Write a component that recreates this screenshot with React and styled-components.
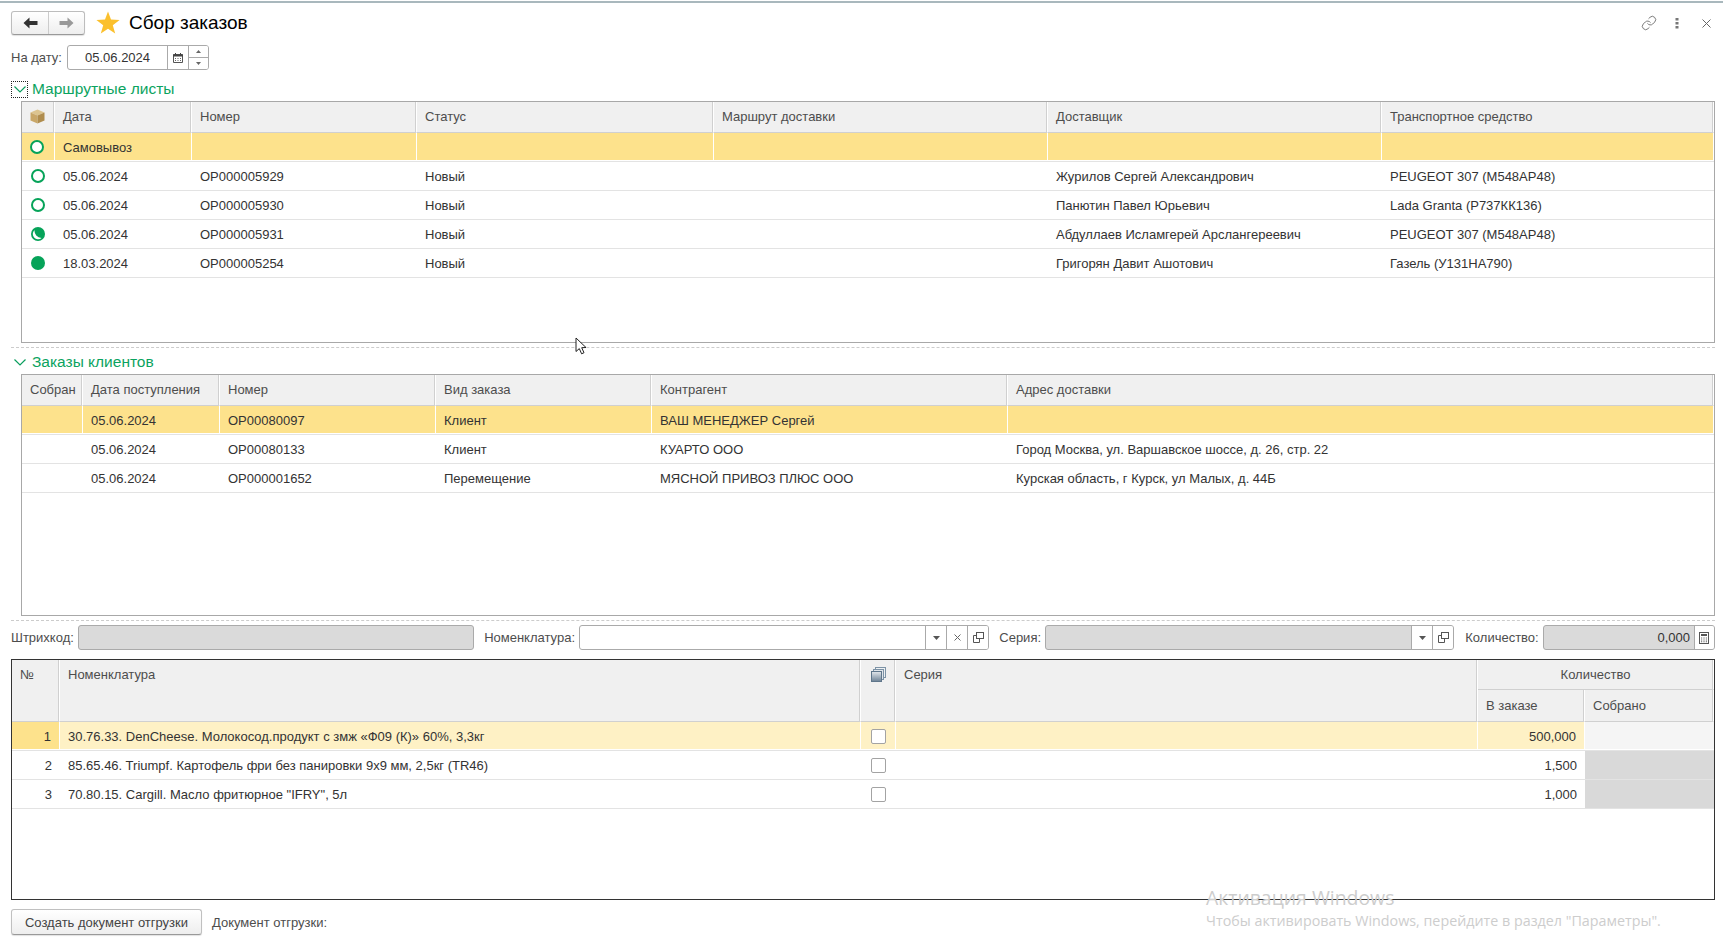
import React from "react";
import styled, { createGlobalStyle } from "styled-components";
import { Link } from "lucide-react";

const GlobalStyle = createGlobalStyle`
  html, body {
    margin: 0;
    padding: 0;
    background: #fff;
    overflow: hidden;
  }
  * { box-sizing: border-box; }
`;

const Page = styled.div`
  position: relative;
  width: 1723px;
  height: 944px;
  overflow: hidden;
  background: #fff;
  color: #333;
  font: 13px "Liberation Sans", Arial, sans-serif;
`;

const TopLine = styled.div`
  height: 3px;
  border-top: 1px solid #fff;
  border-bottom: 2px solid #a9b8bd;
`;

const Content = styled.div`
  display: flex;
  flex-direction: column;
  padding: 0 8px 0 11px;
`;

const TitleBar = styled.div`
  display: flex;
  align-items: center;
  height: 24px;
  margin-top: 8px;
`;

const NavGroup = styled.div`
  display: flex;
  width: 74px;
  height: 24px;
  border: 1px solid #bdbdbd;
  border-bottom-color: #999;
  border-radius: 3px;
  background: linear-gradient(#fff, #eee);
  box-shadow: 0 1px 1px rgba(0, 0, 0, 0.12);
`;

const NavButton = styled.div`
  flex: ${({ $last }) => ($last ? 1 : "0 0 37px")};
  display: flex;
  align-items: center;
  justify-content: center;
  border-right: ${({ $last }) => ($last ? "none" : "1px solid #ccc")};
`;

const Star = styled.svg`
  width: 24px;
  height: 24px;
  margin-left: 11px;
`;

const Title = styled.h1`
  margin: 0 0 0 9px;
  font-size: 19px;
  font-weight: 400;
  color: #000;
`;

const TitleActions = styled.div`
  display: flex;
  align-items: center;
  margin-left: auto;
  margin-right: -6px;
  color: #666;
`;

const ActionSlot = styled.div`
  display: flex;
  align-items: center;
  justify-content: center;
  width: ${({ $w }) => $w}px;
`;

const DateRow = styled.div`
  display: flex;
  align-items: center;
  height: 25px;
  margin-top: 10px;
`;

const Label = styled.span`
  color: #4d4d4d;
  white-space: nowrap;
  margin-left: ${({ $ml }) => $ml || 0}px;
  margin-right: ${({ $mr }) => $mr || 0}px;
`;

const Field = styled.div`
  display: flex;
  align-items: stretch;
  height: 25px;
  width: ${({ $w }) => $w}px;
  border: 1px solid #aaa;
  border-radius: 3px;
  overflow: hidden;
  background: ${({ $off }) => ($off ? "#dadada" : "#fff")};
`;

const FieldValue = styled.div`
  flex: 1;
  display: flex;
  align-items: center;
  justify-content: ${({ $right }) => ($right ? "flex-end" : "flex-start")};
  padding: ${({ $right }) => ($right ? "0 4px 0 0" : "0 0 0 17px")};
  color: #333;
`;

const FieldButton = styled.div`
  display: flex;
  align-items: center;
  justify-content: center;
  flex: 0 0 ${({ $w }) => $w || 21}px;
  border-left: 1px solid #aaa;
  background: #fff;
  color: #555;
`;

const Spinner = styled.div`
  display: flex;
  flex-direction: column;
  flex: 0 0 20px;
  border-left: 1px solid #aaa;
  background: #fff;
`;

const SpinnerPart = styled.div`
  flex: 1;
  display: flex;
  align-items: center;
  justify-content: center;
  border-top: ${({ $lower }) => ($lower ? "1px solid #aaa" : "none")};
`;

const Section = styled.div`
  display: flex;
  align-items: center;
  height: ${({ $h }) => $h}px;
  margin-top: ${({ $mt }) => $mt || 0}px;
  padding-top: ${({ $pt }) => $pt || 0}px;
`;

const Toggle = styled.div`
  display: flex;
  align-items: center;
  justify-content: center;
  width: 17px;
  height: 17px;
  border: ${({ $focus }) => ($focus ? "1px dotted #222" : "none")};
`;

const SectionTitle = styled.span`
  margin-left: 4px;
  font-size: 15.5px;
  color: #0ba360;
`;

const TableBox = styled.div`
  display: flex;
  flex-direction: column;
  height: ${({ $h }) => $h}px;
  margin-left: ${({ $ml }) => $ml || 0}px;
  margin-top: ${({ $mt }) => $mt || 0}px;
  border: 1px solid ${({ $dark }) => ($dark ? "#333" : "#a8a8a8")};
  overflow: hidden;
`;

const HeadRow = styled.div`
  display: grid;
  grid-template-columns: ${({ $cols }) => $cols};
  grid-template-rows: ${({ $rows }) => $rows || "31px"};
`;

const HeadCell = styled.div`
  display: flex;
  align-items: ${({ $top }) => ($top ? "flex-start" : "center")};
  justify-content: ${({ $center }) => ($center ? "center" : "flex-start")};
  grid-column: ${({ $colSpan }) => ($colSpan ? `span ${$colSpan}` : "auto")};
  grid-row: ${({ $rowSpan }) => ($rowSpan ? `span ${$rowSpan}` : "auto")};
  padding: ${({ $top, $flat }) => ($top ? "7px 8px 0" : $flat ? "0 8px" : "0 8px 2px")};
  background: #f0f0f0;
  color: #4d4d4d;
  white-space: nowrap;
  border-right: 1px solid #fff;
  border-bottom: 1px solid #d0d0d0;
  box-shadow: inset -1px 0 0 #d0d0d0;
`;

const Row = styled.div`
  display: grid;
  grid-template-columns: ${({ $cols }) => $cols};
  height: 29px;
  border-bottom: 1px solid #e3e3e3;
  padding-bottom: ${({ $active }) => ($active ? "1px" : "0")};
`;

const Cell = styled.div`
  display: flex;
  align-items: center;
  justify-content: ${({ $align }) => $align || "flex-start"};
  padding: ${({ $divider }) => ($divider ? "1px 8px 0" : "0 8px")};
  min-width: 0;
  white-space: nowrap;
  color: #333;
  background: ${({ $bg }) => $bg || "transparent"};
  border-right: ${({ $divider }) => ($divider ? "1px solid #fff" : "none")};
`;

const CheckBox = styled.div`
  width: 15px;
  height: 15px;
  border: 1px solid #a3a3a3;
  border-radius: 2px;
  background: #fff;
`;

const Dashed = styled.div`
  height: 1px;
  margin-top: ${({ $mt }) => $mt}px;
  border-top: 1px dashed #ccc;
`;

const FilterRow = styled.div`
  display: flex;
  align-items: center;
  height: 25px;
  margin-top: 4px;
`;

const Footer = styled.div`
  display: flex;
  align-items: center;
  height: 26px;
  margin-top: 9px;
`;

const FooterButton = styled.div`
  display: flex;
  align-items: center;
  justify-content: center;
  width: 191px;
  height: 26px;
  border: 1px solid #c0c0c0;
  border-bottom-color: #999;
  border-radius: 3px;
  background: linear-gradient(#fff, #eee);
  box-shadow: 0 1px 1px rgba(0, 0, 0, 0.12);
  color: #444;
`;

const Watermark = styled.div`
  position: absolute;
  left: 1206px;
  top: 884px;
  font-family: "Open Sans", sans-serif;
  color: #cdcdcd;
  pointer-events: none;
`;

const WatermarkTitle = styled.div`
  font-size: 19.4px;
  font-weight: 400;
  line-height: 27px;
`;

const WatermarkText = styled.div`
  font-size: 14.3px;
  line-height: 20px;
`;

const Cursor = styled.svg`
  position: absolute;
  left: 575px;
  top: 337px;
  width: 13px;
  height: 19px;
`;

const ColIcon = styled.svg`
  margin-left: -2px;
`;

const ArrowBack = ({ color }) => (
  <svg width="15" height="12" viewBox="0 0 15 12">
    <path d="M6.5 0.5 L0.5 6 L6.5 11.5 V8 H14.5 V4 H6.5 Z" fill={color} />
  </svg>
);

const ArrowForward = ({ color }) => (
  <svg width="15" height="12" viewBox="0 0 15 12">
    <path d="M8.5 0.5 L14.5 6 L8.5 11.5 V8 H0.5 V4 H8.5 Z" fill={color} />
  </svg>
);

const CalendarIcon = () => (
  <svg width="10" height="10" viewBox="0 0 10 10">
    <path d="M0.5 1.5 H9.5 V9.5 H0.5 Z" fill="none" stroke="#555" />
    <path d="M0 1.5 H10 V3.5 H0 Z" fill="#444" />
    <path d="M2.5 0 V2 M7.5 0 V2" stroke="#444" />
    <path d="M2 5h1v1H2zM4.5 5h1v1h-1zM7 5h1v1H7zM2 7h1v1H2zM4.5 7h1v1h-1zM7 7h1v1H7z" fill="#666" />
  </svg>
);

const CalcIcon = () => (
  <svg width="10" height="12" viewBox="0 0 10 12">
    <rect x="0.5" y="0.5" width="9" height="11" fill="none" stroke="#555" />
    <rect x="2" y="2" width="6" height="2" fill="#555" />
    <path d="M2 5.5h1.2v1H2zM4.4 5.5h1.2v1H4.4zM6.8 5.5H8v1H6.8zM2 7.5h1.2v1H2zM4.4 7.5h1.2v1H4.4zM6.8 7.5H8v1H6.8zM2 9.3h1.2v1H2zM4.4 9.3h1.2v1H4.4zM6.8 9.3H8v1H6.8z" fill="#666" />
  </svg>
);

const OpenIcon = () => (
  <svg width="11" height="11" viewBox="0 0 11 11" fill="none" stroke="#555">
    <rect x="3.5" y="0.5" width="7" height="6" />
    <path d="M3.5 3.5 H0.5 V10.5 H6.5 V6.5" />
  </svg>
);

const DropIcon = () => (
  <svg width="7" height="4" viewBox="0 0 7 4">
    <path d="M0 0 H7 L3.5 4 Z" fill="#555" />
  </svg>
);

const CrossIcon = () => (
  <svg width="7" height="7" viewBox="0 0 7 7">
    <path d="M0.5 0.5 L6.5 6.5 M6.5 0.5 L0.5 6.5" stroke="#666" />
  </svg>
);

const Chevron = () => (
  <svg width="12" height="7" viewBox="0 0 12 7" fill="none">
    <path d="M0.5 0.5 L6 6 L11.5 0.5" stroke="#0a9e5e" strokeWidth="1.2" />
  </svg>
);

const CubeIcon = () => (
  <ColIcon width="15" height="15" viewBox="0 0 15 15">
    <path d="M7.5 0.5 L14.5 3.5 L7.5 6.5 L0.5 3.5 Z" fill="#dcc48f" />
    <path d="M0.5 3.5 L7.5 6.5 V14.5 L0.5 11.5 Z" fill="#c9a768" />
    <path d="M14.5 3.5 L7.5 6.5 V14.5 L14.5 11.5 Z" fill="#b08d4e" />
  </ColIcon>
);

const StackIcon = () => (
  <svg width="15" height="15" viewBox="0 0 15 15">
    <defs>
      <linearGradient id="stackFill" x1="0" y1="0" x2="0" y2="1">
        <stop offset="0" stopColor="#e4e8ec" />
        <stop offset="1" stopColor="#6d8296" />
      </linearGradient>
    </defs>
    <rect x="4.5" y="0.5" width="10" height="10" fill="#eef1f3" stroke="#7d93a6" />
    <rect x="2.5" y="2.5" width="10" height="10" fill="#dfe4e9" stroke="#7d93a6" />
    <rect x="0.5" y="4.5" width="10" height="10" fill="url(#stackFill)" stroke="#5f768b" />
  </svg>
);

const StatusIcon = ({ kind }) => (
  <ColIcon width="14" height="14" viewBox="0 0 14 14">
    {kind === "empty" ? (
      <circle cx="7" cy="7" r="6" fill="#fff" stroke="#06a359" strokeWidth="2" />
    ) : (
      <circle cx="7" cy="7" r="7" fill="#06a359" />
    )}
    {kind === "part" && <path d="M3.6 3 A5.2 5.2 0 0 0 10.6 11 A7 7 0 0 1 3.6 3 Z" fill="#fff" />}
  </ColIcon>
);

const routeCols = "33px 137px 225px 297px 334px 334px 1fr";
const orderCols = "61px 137px 216px 216px 356px 1fr";
const goodsCols = "48px 801px 35px 582px 107px 1fr";

const routeHead = ["Дата", "Номер", "Статус", "Маршрут доставки", "Доставщик", "Транспортное средство"];

const routes = [
  { status: "empty", cells: ["Самовывоз", "", "", "", "", ""], active: true },
  { status: "empty", cells: ["05.06.2024", "ОР000005929", "Новый", "", "Журилов Сергей Александрович", "PEUGEOT 307 (М548АР48)"] },
  { status: "empty", cells: ["05.06.2024", "ОР000005930", "Новый", "", "Панютин Павел Юрьевич", "Lada Granta (Р737КК136)"] },
  { status: "part", cells: ["05.06.2024", "ОР000005931", "Новый", "", "Абдуллаев Исламгерей Арслангереевич", "PEUGEOT 307 (М548АР48)"] },
  { status: "full", cells: ["18.03.2024", "ОР000005254", "Новый", "", "Григорян Давит Ашотович", "Газель (У131НА790)"] },
];

const orderHead = ["Собран", "Дата поступления", "Номер", "Вид заказа", "Контрагент", "Адрес доставки"];

const orders = [
  { cells: ["", "05.06.2024", "ОР00080097", "Клиент", "ВАШ МЕНЕДЖЕР Сергей", ""], active: true },
  { cells: ["", "05.06.2024", "ОР00080133", "Клиент", "КУАРТО ООО", "Город Москва, ул. Варшавское шоссе, д. 26, стр. 22"] },
  { cells: ["", "05.06.2024", "ОР000001652", "Перемещение", "МЯСНОЙ ПРИВОЗ ПЛЮС ООО", "Курская область, г Курск, ул Малых, д. 44Б"] },
];

const goods = [
  { n: 1, name: "30.76.33. DenCheese. Молокосод.продукт с змж «Ф09 (К)» 60%, 3,3кг", qty: "500,000", active: true },
  { n: 2, name: "85.65.46. Triumpf. Картофель фри без панировки 9х9 мм, 2,5кг (TR46)", qty: "1,500" },
  { n: 3, name: "70.80.15. Cargill. Масло фритюрное \"IFRY\", 5л", qty: "1,000" },
];

const YELLOW = "#fde28c";
const PALE = "#fef1c5";

const App = () => {
  return (
    <Page>
      <GlobalStyle />
      <TopLine />
      <Content>
        <TitleBar>
          <NavGroup>
            <NavButton><ArrowBack color="#333" /></NavButton>
            <NavButton $last><ArrowForward color="#999" /></NavButton>
          </NavGroup>
          <Star viewBox="0 0 24 24">
            <path d="M12 0.5 L15 8.6 L23.6 8.9 L16.8 14.2 L19.2 22.6 L12 17.7 L4.8 22.6 L7.2 14.2 L0.4 8.9 L9 8.6 Z" fill="#fbc02d" />
          </Star>
          <Title>Сбор заказов</Title>
          <TitleActions>
            <ActionSlot $w={24}><Link size={16} strokeWidth={1.3} /></ActionSlot>
            <ActionSlot $w={31}>
              <svg width="4" height="11" viewBox="0 0 4 11">
                <path d="M0.5 0h3v2.6h-3zM0.5 4h3v2.6h-3zM0.5 8h3v2.6h-3z" fill="#777" />
              </svg>
            </ActionSlot>
            <ActionSlot $w={29}>
              <svg width="9" height="9" viewBox="0 0 9 9">
                <path d="M0.5 0.5 L8.5 8.5 M8.5 0.5 L0.5 8.5" stroke="#666" />
              </svg>
            </ActionSlot>
          </TitleActions>
        </TitleBar>

        <DateRow>
          <Label $mr={5}>На дату:</Label>
          <Field $w={142}>
            <FieldValue>05.06.2024</FieldValue>
            <FieldButton><CalendarIcon /></FieldButton>
            <Spinner>
              <SpinnerPart>
                <svg width="5" height="3" viewBox="0 0 5 3"><path d="M2.5 0 L5 3 H0 Z" fill="#666" /></svg>
              </SpinnerPart>
              <SpinnerPart $lower>
                <svg width="5" height="3" viewBox="0 0 5 3"><path d="M0 0 H5 L2.5 3 Z" fill="#666" /></svg>
              </SpinnerPart>
            </Spinner>
          </Field>
        </DateRow>

        <Section $h={24} $mt={7}>
          <Toggle $focus><Chevron /></Toggle>
          <SectionTitle>Маршрутные листы</SectionTitle>
        </Section>
        <TableBox $h={242} $ml={10}>
          <HeadRow $cols={routeCols}>
            <HeadCell $center><CubeIcon /></HeadCell>
            {routeHead.map((h) => <HeadCell key={h}>{h}</HeadCell>)}
          </HeadRow>
          {routes.map((r, i) => (
            <Row key={i} $cols={routeCols} $active={r.active}>
              <Cell $align="center" $bg={r.active && YELLOW} $divider={r.active}><StatusIcon kind={r.status} /></Cell>
              {r.cells.map((c, j) => (
                <Cell key={j} $bg={r.active && YELLOW} $divider={r.active}>{c}</Cell>
              ))}
            </Row>
          ))}
        </TableBox>

        <Dashed $mt={4} />
        <Section $h={26} $pt={2}>
          <Toggle><Chevron /></Toggle>
          <SectionTitle>Заказы клиентов</SectionTitle>
        </Section>
        <TableBox $h={242} $ml={10}>
          <HeadRow $cols={orderCols}>
            {orderHead.map((h) => <HeadCell key={h}>{h}</HeadCell>)}
          </HeadRow>
          {orders.map((r, i) => (
            <Row key={i} $cols={orderCols} $active={r.active}>
              {r.cells.map((c, j) => (
                <Cell key={j} $bg={r.active && YELLOW} $divider={r.active}>{c}</Cell>
              ))}
            </Row>
          ))}
        </TableBox>

        <Dashed $mt={4} />
        <FilterRow>
          <Label $mr={4}>Штрихкод:</Label>
          <Field $w={398} $off />
          <Label $ml={10} $mr={4}>Номенклатура:</Label>
          <Field $w={412}>
            <FieldValue />
            <FieldButton><DropIcon /></FieldButton>
            <FieldButton><CrossIcon /></FieldButton>
            <FieldButton><OpenIcon /></FieldButton>
          </Field>
          <Label $ml={10} $mr={4}>Серия:</Label>
          <Field $w={411} $off>
            <FieldValue />
            <FieldButton><DropIcon /></FieldButton>
            <FieldButton><OpenIcon /></FieldButton>
          </Field>
          <Label $ml={11} $mr={4}>Количество:</Label>
          <Field $w={173} $off>
            <FieldValue $right>0,000</FieldValue>
            <FieldButton $w={20}><CalcIcon /></FieldButton>
          </Field>
        </FilterRow>

        <TableBox $h={241} $dark $mt={9}>
          <HeadRow $cols={goodsCols} $rows="30px 32px">
            <HeadCell $top $rowSpan={2}>№</HeadCell>
            <HeadCell $top $rowSpan={2}>Номенклатура</HeadCell>
            <HeadCell $top $center $rowSpan={2}><StackIcon /></HeadCell>
            <HeadCell $top $rowSpan={2}>Серия</HeadCell>
            <HeadCell $center $flat $colSpan={2}>Количество</HeadCell>
            <HeadCell $flat>В заказе</HeadCell>
            <HeadCell $flat>Собрано</HeadCell>
          </HeadRow>
          {goods.map((g) => (
            <Row key={g.n} $cols={goodsCols} $active={g.active}>
              <Cell $align="flex-end" $bg={g.active && YELLOW} $divider={g.active}>{g.n}</Cell>
              <Cell $bg={g.active && PALE} $divider={g.active}>{g.name}</Cell>
              <Cell $align="center" $bg={g.active && PALE} $divider={g.active}><CheckBox /></Cell>
              <Cell $bg={g.active && PALE} $divider={g.active} />
              <Cell $align="flex-end" $bg={g.active && PALE} $divider={g.active}>{g.qty}</Cell>
              <Cell $bg={g.active ? "#f5f5f5" : "#d9d9d9"} />
            </Row>
          ))}
        </TableBox>

        <Footer>
          <FooterButton>Создать документ отгрузки</FooterButton>
          <Label $ml={10}>Документ отгрузки:</Label>
        </Footer>
      </Content>

      <Watermark>
        <WatermarkTitle>Активация Windows</WatermarkTitle>
        <WatermarkText>Чтобы активировать Windows, перейдите в раздел "Параметры".</WatermarkText>
      </Watermark>

      <Cursor viewBox="0 0 13 19">
        <path d="M1 1 V14.5 L4.3 11.6 L6.6 16.8 L9 15.7 L6.7 10.7 L11 10.5 Z" fill="#fff" stroke="#222" strokeWidth="1" />
      </Cursor>
    </Page>
  );
};

export default App;
